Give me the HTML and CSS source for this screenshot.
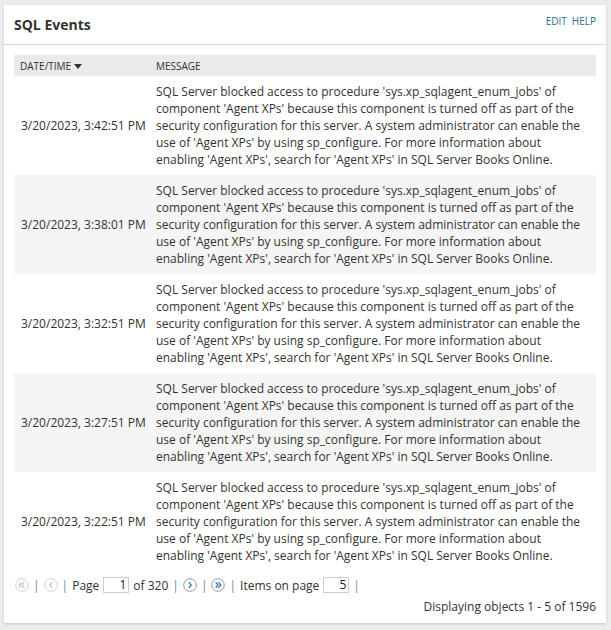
FILE: index.html
```html
<!DOCTYPE html>
<html>
<head>
<meta charset="utf-8">
<link rel="stylesheet" href="styles.css">
</head>
<body>
<div class="panel">
  <div class="panel-header">
    <h1 class="title">SQL Events</h1>
    <div class="actions"><a class="action">Edit</a><a class="action">Help</a></div>
  </div>
  <div class="panel-body">
    <table class="grid">
      <thead>
        <tr><th class="col-date">Date/Time<span class="sort"></span></th><th>Message</th></tr>
      </thead>
      <tbody>
        <tr><td class="date">3/20/2023, 3:42:51 PM</td><td class="msg">SQL Server blocked access to procedure 'sys.xp_sqlagent_enum_jobs' of component 'Agent XPs' because this component is turned off as part of the security configuration for this server. A system administrator can enable the use of 'Agent XPs' by using sp_configure. For more information about enabling 'Agent XPs', search for 'Agent XPs' in SQL Server Books Online.</td></tr>
        <tr class="alt"><td class="date">3/20/2023, 3:38:01 PM</td><td class="msg">SQL Server blocked access to procedure 'sys.xp_sqlagent_enum_jobs' of component 'Agent XPs' because this component is turned off as part of the security configuration for this server. A system administrator can enable the use of 'Agent XPs' by using sp_configure. For more information about enabling 'Agent XPs', search for 'Agent XPs' in SQL Server Books Online.</td></tr>
        <tr><td class="date">3/20/2023, 3:32:51 PM</td><td class="msg">SQL Server blocked access to procedure 'sys.xp_sqlagent_enum_jobs' of component 'Agent XPs' because this component is turned off as part of the security configuration for this server. A system administrator can enable the use of 'Agent XPs' by using sp_configure. For more information about enabling 'Agent XPs', search for 'Agent XPs' in SQL Server Books Online.</td></tr>
        <tr class="alt"><td class="date">3/20/2023, 3:27:51 PM</td><td class="msg">SQL Server blocked access to procedure 'sys.xp_sqlagent_enum_jobs' of component 'Agent XPs' because this component is turned off as part of the security configuration for this server. A system administrator can enable the use of 'Agent XPs' by using sp_configure. For more information about enabling 'Agent XPs', search for 'Agent XPs' in SQL Server Books Online.</td></tr>
        <tr><td class="date">3/20/2023, 3:22:51 PM</td><td class="msg">SQL Server blocked access to procedure 'sys.xp_sqlagent_enum_jobs' of component 'Agent XPs' because this component is turned off as part of the security configuration for this server. A system administrator can enable the use of 'Agent XPs' by using sp_configure. For more information about enabling 'Agent XPs', search for 'Agent XPs' in SQL Server Books Online.</td></tr>
      </tbody>
    </table>
    <div class="pager">
      <svg class="pg-icon disabled" width="14" height="14" viewBox="0 0 14 14"><circle cx="7" cy="7" r="6.3"/><path d="M6.2 4.6 L4.2 7 L6.2 9.4 M9 4.6 L7 7 L9 9.4"/></svg>
      <span class="sep">|</span>
      <svg class="pg-icon disabled" width="14" height="14" viewBox="0 0 14 14"><circle cx="7" cy="7" r="6.3"/><path d="M7.8 4.6 L5.8 7 L7.8 9.4"/></svg>
      <span class="sep">|</span>
      <span class="lbl">Page</span>
      <input class="pg-input" value="1">
      <span class="lbl">of 320</span>
      <span class="sep">|</span>
      <svg class="pg-icon" width="14" height="14" viewBox="0 0 14 14"><circle cx="7" cy="7" r="6.3"/><path d="M6.2 4.6 L8.2 7 L6.2 9.4"/></svg>
      <span class="sep">|</span>
      <svg class="pg-icon" width="14" height="14" viewBox="0 0 14 14"><circle cx="7" cy="7" r="6.3"/><path d="M5 4.6 L7 7 L5 9.4 M7.8 4.6 L9.8 7 L7.8 9.4"/></svg>
      <span class="sep">|</span>
      <span class="lbl">Items on page</span>
      <input class="pg-input" value="5">
      <span class="sep">|</span>
    </div>
    <div class="summary">Displaying objects 1 - 5 of 1596</div>
  </div>
</div>
</body>
</html>
```
FILE: styles.css
```css
html, body {
  margin: 0;
  padding: 0;
}
body {
  background: #ececec;
  font-family: "Open Sans", "Liberation Sans", sans-serif;
  color: #333;
  padding: 5px 5px 8px 4px;
}
.panel {
  width: 602px;
  background: #fff;
  box-shadow: 0 1px 2px rgba(0,0,0,0.18);
}
.panel-header {
  height: 39px;
  border-bottom: 1px solid #d9d9d9;
  display: flex;
  justify-content: space-between;
  align-items: flex-start;
  padding: 0 10px;
}
.title {
  margin: 0;
  font-size: 14px;
  font-weight: 700;
  color: #333;
  line-height: 20px;
  padding-top: 10px;
}
.actions {
  display: flex;
  gap: 5px;
  padding-top: 9px;
}
.action {
  font-size: 10px;
  text-transform: uppercase;
  color: #2f6c8c;
  line-height: 14px;
}
.panel-body {
  padding: 10px 10px 0 10px;
}
.grid {
  width: 582px;
  border-collapse: collapse;
  table-layout: fixed;
}
.grid th {
  background: #e9eaeb;
  font-size: 10px;
  font-weight: 400;
  text-transform: uppercase;
  color: #333;
  text-align: left;
  height: 21px;
  padding: 0 0 0 7px;
  vertical-align: middle;
}
.grid th.col-date {
  width: 129px;
  padding-left: 6px;
}
.sort {
  display: inline-block;
  width: 0;
  height: 0;
  border-left: 4px solid transparent;
  border-right: 4px solid transparent;
  border-top: 5px solid #333;
  margin-left: 3px;
  vertical-align: 1px;
}
.grid td {
  font-size: 12px;
  line-height: 17px;
  padding: 7px 7px 7px 7px;
  color: #333;
}
.grid td.date {
  vertical-align: middle;
  white-space: nowrap;
  padding-left: 7px;
  padding-right: 0;
}
.grid td.msg {
  vertical-align: top;
  padding-right: 6px;
}
.grid tr.alt td {
  background: #f5f5f5;
}
.pager {
  display: flex;
  align-items: center;
  height: 20px;
  margin-top: 4px;
  padding-left: 1px;
  font-size: 12px;
  color: #333;
  gap: 4px;
}
.pg-icon {
  display: block;
  fill: none;
  stroke-width: 1;
}
.pg-icon circle {
  stroke: #9a9a9a;
  fill: #fff;
}
.pg-icon path {
  stroke: #2a78b5;
  stroke-width: 1.3;
  stroke-linecap: round;
  stroke-linejoin: round;
}
.pg-icon.disabled circle {
  stroke: #cfcfcf;
}
.pg-icon.disabled path {
  stroke: #a9c9e6;
}
.sep {
  color: #6b88a8;
}
.pg-input {
  width: 21px;
  height: 14px;
  border: 1px solid #cdcdcd;
  padding: 0 2px 0 1px;
  margin: 0;
  font-family: "Open Sans", "Liberation Sans", sans-serif;
  font-size: 12px;
  color: #222;
  text-align: right;
  line-height: 14px;
}
.summary {
  text-align: right;
  font-size: 12px;
  line-height: 18px;
  margin-top: 3px;
  padding-bottom: 7px;
}
```
